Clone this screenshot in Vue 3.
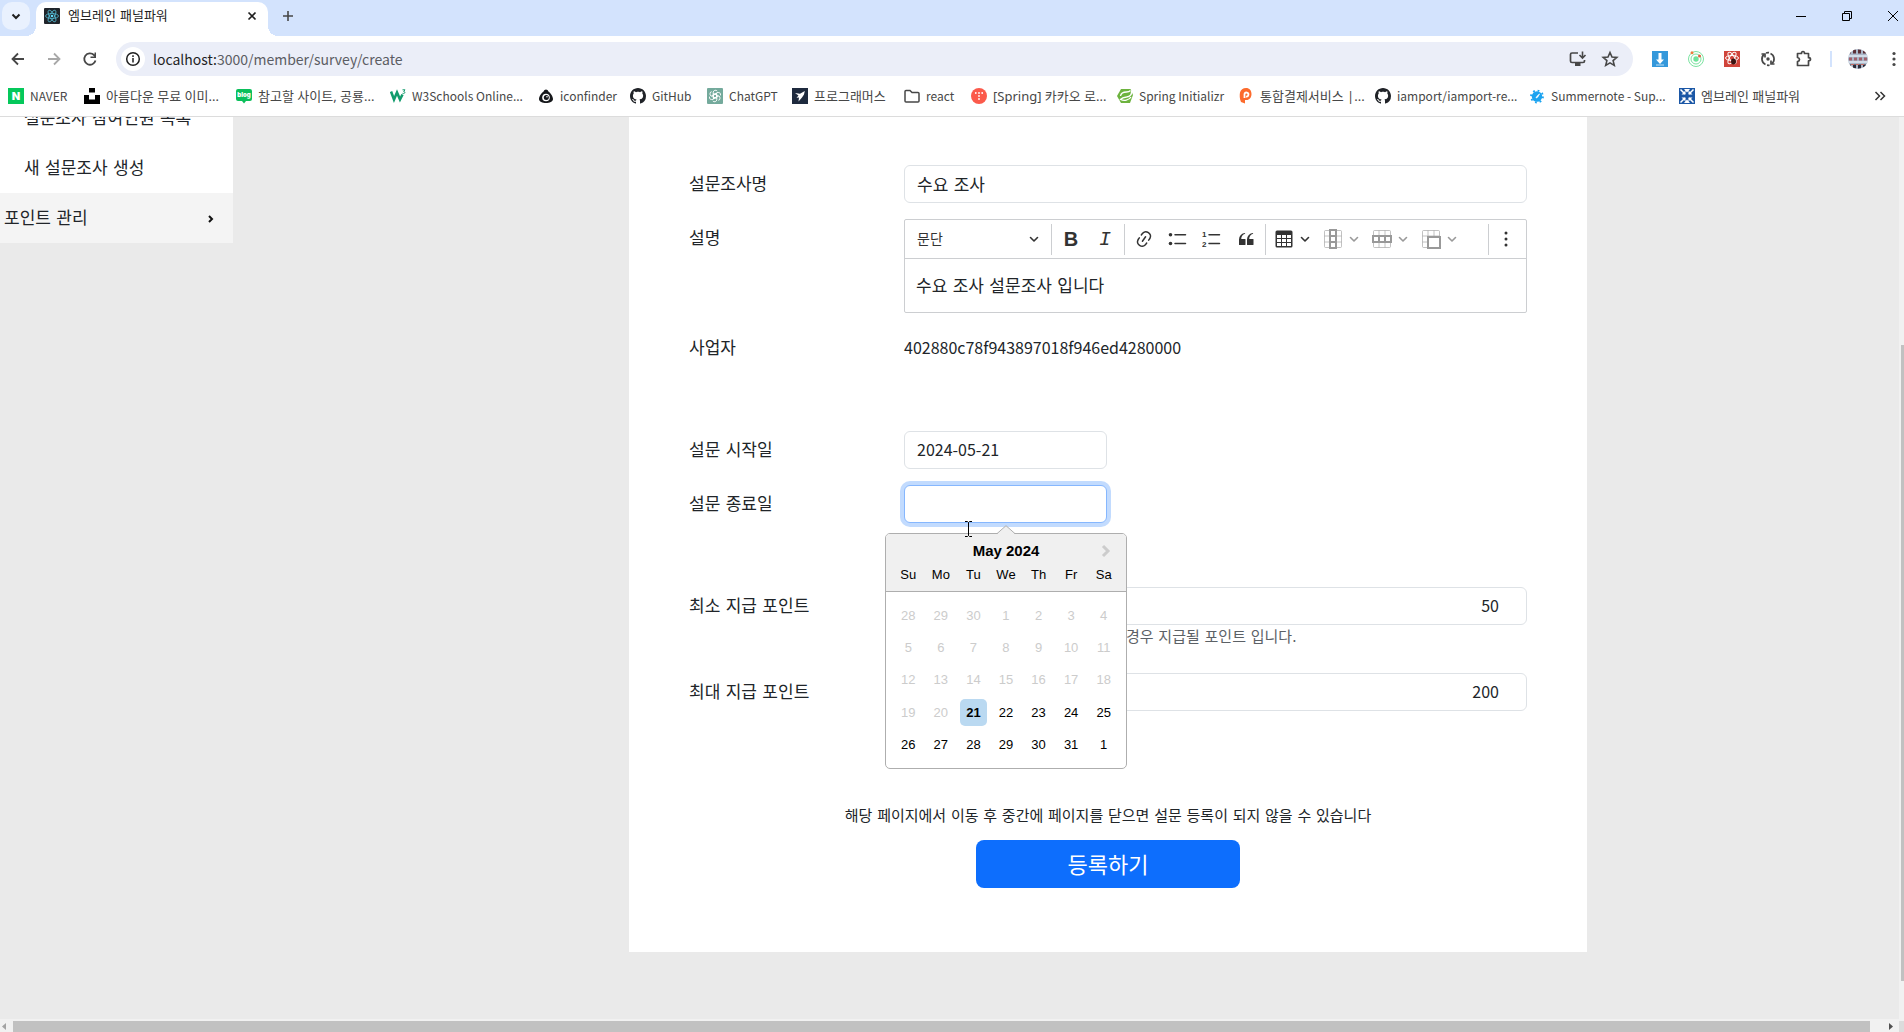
<script setup>
import { ref } from 'vue'

const bookmarks = [
  { icon: 'naver', mark: { text: 'N', y: 12, size: 11 }, label: 'NAVER', width: 60 },
  { icon: 'unsplash', label: '아름다운 무료 이미...', width: 136 },
  { icon: 'blog', mark: { text: 'blog', y: 9, size: 6 }, label: '참고할 사이트, 공룡...', width: 138 },
  { icon: 'w3', label: 'W3Schools Online...', width: 132 },
  { icon: 'finder', label: 'iconfinder', width: 76 },
  { icon: 'github', label: 'GitHub', width: 61 },
  { icon: 'gpt', label: 'ChatGPT', width: 69 },
  { icon: 'programmers', label: '프로그래머스', width: 96 },
  { icon: 'folder', label: 'react', width: 51 },
  { icon: 'tistory', label: '[Spring] 카카오 로...', width: 130 },
  { icon: 'spring', label: 'Spring Initializr', width: 105 },
  { icon: 'portone', label: '통합결제서비스 |...', width: 121 },
  { icon: 'github', label: 'iamport/iamport-re...', width: 138 },
  { icon: 'summernote', label: 'Summernote - Sup...', width: 134 },
  { icon: 'embrain', label: '엠브레인 패널파워', width: 126 },
]
const hasHangul = (s) => /[가-힣]/.test(s)

const weekdays = ['Su', 'Mo', 'Tu', 'We', 'Th', 'Fr', 'Sa']
const days = Array.from({ length: 35 }, (_, i) => {
  const date = new Date(2024, 3, 28 + i)
  return { key: i, n: date.getDate(), disabled: i < 23, selected: i === 23 }
})

const title = ref('수요 조사')
const startDate = ref('2024-05-21')
const endDate = ref('')
const minPoint = ref('50')
const maxPoint = ref('200')
</script>

<template>
  <div class="window">
    <svg class="defs" width="0" height="0" aria-hidden="true">
      <symbol id="naver" viewBox="0 0 16 16"><rect width="16" height="16" fill="#05c85b" /></symbol>
      <symbol id="unsplash" viewBox="0 0 16 16"><path d="M5 0h6v4.500H5zM0 7h5v4.500h6V7h5v9H0z" fill="#000" /></symbol>
      <symbol id="blog" viewBox="0 0 16 16">
        <path d="M2 1h12a2 2 0 0 1 2 2v8a2 2 0 0 1-2 2h-4l-2 2.500L6 13H2a2 2 0 0 1-2-2V3a2 2 0 0 1 2-2z" fill="#0bbf5b" />
      </symbol>
      <symbol id="w3" viewBox="0 0 16 16">
        <path d="M1 3.500l3 8 3-7 3 7 2.500-5" fill="none" stroke="#119b6c" stroke-width="2.600" />
        <path d="M12.500 1.800h2.500l-1.300 1.700c2 .200 1.500 2.500-1.200 1.800" fill="none" stroke="#119b6c" />
      </symbol>
      <symbol id="finder" viewBox="0 0 16 16">
        <path d="M8 1.500c1 0 2 .7 2.200 1.800C12.500 5 15 8.500 15 11c0 2.700-3.500 4-7 4s-7-1.300-7-4c0-2.500 2.500-6 4.800-7.700C6 2.200 7 1.500 8 1.500z" fill="#16181b" />
        <circle cx="8" cy="9.500" r="3.800" fill="#fff" /><circle cx="8.300" cy="9.500" r="2.500" fill="#16181b" />
        <circle cx="9" cy="8.700" r=".8" fill="#fff" />
      </symbol>
      <symbol id="github" viewBox="0 0 16 16">
        <path fill="#202328" d="M8 0C3.580 0 0 3.580 0 8c0 3.540 2.290 6.530 5.470 7.590.4.070.55-.17.55-.38 0-.19-.01-.82-.01-1.490-2.010.37-2.530-.49-2.690-.94-.09-.23-.48-.94-.82-1.130-.28-.15-.68-.52-.01-.53.63-.01 1.080.58 1.230.82.72 1.210 1.870.87 2.330.66.07-.52.28-.87.51-1.070-1.780-.2-3.640-.89-3.640-3.950 0-.87.31-1.590.82-2.150-.08-.2-.36-1.020.08-2.120 0 0 .67-.21 2.200.82.64-.18 1.320-.27 2-.27s1.360.09 2 .27c1.530-1.040 2.200-.82 2.200-.82.44 1.100.16 1.920.08 2.120.51.56.82 1.270.82 2.150 0 3.070-1.870 3.750-3.650 3.950.29.25.54.73.54 1.480 0 1.070-.01 1.930-.01 2.200 0 .21.15.46.55.38A8.010 8.010 0 0 0 16 8c0-4.420-3.580-8-8-8z" />
      </symbol>
      <symbol id="gpt" viewBox="0 0 16 16">
        <rect width="16" height="16" rx="1" fill="#74aa9c" />
        <g fill="none" stroke="#fff" stroke-width=".9">
          <path v-for="a in 6" :key="a" :transform="`rotate(${a * 60} 8 8)`" d="M6.200 7V4.200a2.300 2.300 0 0 1 4-1.200M6.200 5.200l3.500 2v2.200" />
        </g>
      </symbol>
      <symbol id="programmers" viewBox="0 0 16 16">
        <rect width="16" height="16" fill="#1e2a3e" />
        <path d="M3 5l5 .8L12.800 3 12 6.500 10 9.500l-3.500 4 .5-4-2.500.3L6.500 7.500z" fill="#fff" />
      </symbol>
      <symbol id="folder" viewBox="0 0 16 16"><path d="M1 3.500q0-1 1-1h4l2 2h6q1 0 1 1V13q0 1-1 1H2q-1 0-1-1z" fill="none" stroke="#474747" stroke-width="1.500" /></symbol>
      <symbol id="tistory" viewBox="0 0 16 16">
        <circle cx="8" cy="8" r="8" fill="#fb5a4b" />
        <g fill="#fff"><circle cx="4.800" cy="5" r=".9" /><circle cx="8" cy="5" r=".9" /><circle cx="11.200" cy="5" r=".9" /><circle cx="8" cy="8" r=".9" /><circle cx="8" cy="11" r=".9" /></g>
      </symbol>
      <symbol id="spring" viewBox="0 0 16 16">
        <path d="M4 1h9.500L16 7l-3 8H4L0 8z" fill="#6db33f" />
        <path d="M14.500 3c.5 3.500-1.500 5.500-5 6-2.500.3-4.500.8-6 2.500 3.500 1.500 8.500 1 10.500-2.500" fill="none" stroke="#fff" stroke-width="1.300" />
        <path d="M3.500 8c.5-3 3-4 6-4 1.500 0 3-.5 4-1.500" fill="none" stroke="#fff" stroke-width="1.300" />
      </symbol>
      <symbol id="portone" viewBox="0 0 16 16">
        <path d="M8 0c3.500 0 5.500 2.600 5.500 6S11.500 12 8.500 12H7v3.500L3 14C1.500 11 1.500 7 2 4.500 2.600 2 5 0 8 0z" fill="#fc6b2d" />
        <path d="M6.500 10V5.500M6.500 6a2 2 0 1 1 1.500 2.500" fill="none" stroke="#fff" stroke-width="1.800" />
      </symbol>
      <symbol id="summernote" viewBox="0 0 16 16">
        <circle cx="8" cy="8.500" r="5.200" fill="#1aa3f0" />
        <circle cx="8" cy="8.500" r="6" fill="none" stroke="#1aa3f0" stroke-width="1.800" stroke-dasharray="1.800 2.900" />
        <path d="M7 10l.8-1.600L10.500 6 8.600 9.200z" fill="#fff" stroke="#fff" stroke-width=".8" />
      </symbol>
      <symbol id="embrain" viewBox="0 0 16 16">
        <rect width="16" height="16" fill="#1b57a6" />
        <g stroke="#fff" stroke-width="1.500" fill="#fff">
          <path d="M1.500 1.500L6 6M14.500 1.500L10 6M1.500 14.500L6 10M14.500 14.500L10 10" />
          <path stroke="none" d="M5 1h6L8 4.500zM5 15h6l-3-3.500zM2.500 6.500h4v-4zM13.500 6.500h-4v-4zM2.500 9.500h4v4zM13.500 9.500h-4v4z" />
        </g>
      </symbol>
      <symbol id="caret" viewBox="0 0 10 10"><path d="M1.500 3.500L5 7l3.500-3.500" fill="none" stroke="currentColor" stroke-width="1.600" stroke-linecap="round" stroke-linejoin="round" /></symbol>
    </svg>

    <header class="chrome">
      <div class="tabstrip">
        <button class="tab-search" aria-label="탭 검색">
          <svg width="12" height="12" viewBox="0 0 12 12"><path d="M2.500 4.500L6 8l3.500-3.500" fill="none" stroke="#1f1f1f" stroke-width="2" /></svg>
        </button>
        <div class="tab">
          <svg width="16" height="16" viewBox="0 0 16 16">
            <rect width="16" height="16" rx="1" fill="#20252b" />
            <g fill="none" stroke="#53b9d2" stroke-width=".8">
              <ellipse cx="8" cy="8" rx="6.500" ry="2.500" />
              <ellipse cx="8" cy="8" rx="6.500" ry="2.500" transform="rotate(60 8 8)" />
              <ellipse cx="8" cy="8" rx="6.500" ry="2.500" transform="rotate(120 8 8)" />
            </g>
            <circle cx="8" cy="8" r="1.300" fill="#61dafb" />
          </svg>
          <span class="tab-title">엠브레인 패널파워</span>
          <button class="plain" aria-label="탭 닫기">
            <svg width="16" height="16" viewBox="0 0 16 16"><path d="M4.500 4.500l7 7M11.500 4.500l-7 7" stroke="#1f1f1f" stroke-width="1.700" /></svg>
          </button>
        </div>
        <button class="plain new-tab" aria-label="새 탭">
          <svg width="12" height="12" viewBox="0 0 12 12"><path d="M6 1v10M1 6h10" stroke="#474747" stroke-width="1.600" /></svg>
        </button>
        <div class="win-controls">
          <button class="plain" aria-label="최소화"><svg width="12" height="12" viewBox="0 0 12 12"><path d="M1 6.500h10" stroke="#000" /></svg></button>
          <button class="plain" aria-label="복원"><svg width="12" height="12" viewBox="0 0 12 12"><path d="M1.500 3.500h7v7h-7zM3.500 3.500v-2h7v7h-2" fill="none" stroke="#000" /></svg></button>
          <button class="plain" aria-label="닫기"><svg width="12" height="12" viewBox="0 0 12 12"><path d="M1 1l10 10M11 1L1 11" stroke="#000" /></svg></button>
        </div>
      </div>

      <div class="toolbar">
        <button class="plain nav-btn" aria-label="뒤로"><svg width="16" height="16" viewBox="0 0 16 16"><path d="M14 8H3M8 2.500L2.500 8 8 13.500" fill="none" stroke="#474747" stroke-width="1.800" /></svg></button>
        <button class="plain nav-btn" aria-label="앞으로"><svg width="16" height="16" viewBox="0 0 16 16"><path d="M2 8h11M8 2.500L13.500 8 8 13.500" fill="none" stroke="#a8a8a8" stroke-width="1.800" /></svg></button>
        <button class="plain nav-btn" aria-label="새로고침"><svg width="16" height="16" viewBox="0 0 16 16"><path d="M13.500 9.500A5.700 5.700 0 1 1 12 4l1.500 1.500" fill="none" stroke="#474747" stroke-width="1.800" /><path d="M14 1.500V7H8.500V5.500h4v-4z" fill="#474747" /></svg></button>
        <div class="omnibox">
          <span class="site-info"><svg width="16" height="16" viewBox="0 0 16 16"><circle cx="8" cy="8" r="6.300" fill="none" stroke="#1f1f1f" stroke-width="1.500" /><path d="M8 7v4.500M8 4.300v1.600" stroke="#1f1f1f" stroke-width="1.500" /></svg></span>
          <span class="url"><span class="host">localhost:</span>3000/member/survey/create</span>
          <button class="plain box-btn" aria-label="앱 설치"><svg width="18" height="18" viewBox="0 0 18 18"><path d="M9 3H3q-1.500 0-1.500 1.500V11q0 1.500 1.500 1.500h11q1.500 0 1.500-1.500v-1" fill="none" stroke="#474747" stroke-width="1.700" /><path d="M6 13h5.500v3H6z" fill="#474747" /><path d="M13.500 1.500v6M10.500 5l3 3 3-3" fill="none" stroke="#474747" stroke-width="1.600" /></svg></button>
          <button class="plain box-btn" aria-label="북마크에 추가"><svg width="18" height="18" viewBox="0 0 18 18"><path d="M9 2.500l2 4.500 4.800.4-3.700 3.200 1.200 4.800L9 12.900l-4.300 2.500 1.200-4.800L2.200 7.400 7 7z" fill="none" stroke="#474747" stroke-width="1.600" /></svg></button>
        </div>
        <div class="extensions">
          <button class="plain nav-btn" aria-label="다운로드"><svg width="16" height="16" viewBox="0 0 16 16"><rect width="16" height="16" fill="#3498db" /><path d="M6.500 2h3v6.500H12L8 13 4 8.500h2.500z" fill="#fff" /><path d="M4 14h8" stroke="#bfe0f5" /></svg></button>
          <button class="plain nav-btn" aria-label="레이더"><svg width="16" height="16" viewBox="0 0 16 16"><g fill="none" stroke="#7be3a0"><circle cx="8" cy="8" r="7.500" /><circle cx="8" cy="8" r="5" /></g><circle cx="8" cy="8" r="2.700" fill="#6fe39a" /><circle cx="4" cy="1.700" r="1.500" fill="#ee7b3c" /><circle cx="11.500" cy="5" r="1.500" fill="#e2613c" /></svg></button>
          <button class="plain nav-btn" aria-label="React 개발자 도구"><svg width="16" height="16" viewBox="0 0 16 16"><rect width="16" height="16" fill="#d0443a" /><g fill="none" stroke="#fff"><ellipse cx="8" cy="7" rx="6.500" ry="2.500" /><ellipse cx="8" cy="7" rx="6.500" ry="2.500" transform="rotate(60 8 7)" /><ellipse cx="8" cy="7" rx="6.500" ry="2.500" transform="rotate(120 8 7)" /></g><ellipse cx="9.500" cy="10.500" rx="2.500" ry="3" fill="#3a1512" /></svg></button>
          <button class="plain nav-btn" aria-label="새로고침 확장"><svg width="16" height="16" viewBox="0 0 16 16"><g fill="none" stroke="#474747" stroke-width="1.700"><path d="M5.500 13.500A6 6 0 0 1 4 3.500M12 12.500A6 6 0 0 0 10.500 2.500M9 1.700A6 6 0 0 0 6 2" /><path d="M1.500 3H5v3.500M14.500 13H11V9.500M7 14.200q1.500.2 2.500 0" /></g><circle cx="8" cy="8" r="1.700" fill="#474747" /></svg></button>
          <button class="plain nav-btn" aria-label="확장 프로그램"><svg width="18" height="18" viewBox="0 0 18 18"><path d="M2.500 3.500h4q0-2 1.500-2t1.500 2h4v4.200q2 0 2 1.600t-2 1.600v4.600h-11v-4q2-.3 2-2t-2-2z" fill="none" stroke="#474747" stroke-width="1.700" stroke-linejoin="round" /></svg></button>
          <span class="divider"></span>
          <button class="plain avatar" aria-label="프로필"><svg width="20" height="20" viewBox="0 0 20 20"><clipPath id="avatar-clip"><circle cx="10" cy="10" r="10" /></clipPath><g clip-path="url(#avatar-clip)"><rect width="20" height="20" fill="#a9b6c8" /><path d="M0 2.500h20" stroke="#5a2f36" stroke-width="4" stroke-dasharray="3 2" /><path d="M0 7h20M0 13h20" stroke="#dfe9f2" stroke-width="1.500" /><path d="M1 10h18" stroke="#a0606c" stroke-width="3" stroke-dasharray="3 2" /><path d="M0 17.500h20" stroke="#2c2b38" stroke-width="4" stroke-dasharray="3 2" /><path d="M3 15.500h14" stroke="#c96a62" stroke-dasharray="3 2" /></g></svg></button>
          <button class="plain menu-dots" aria-label="메뉴"><svg width="4" height="16" viewBox="0 0 4 16" fill="#474747"><circle cx="2" cy="2.500" r="1.600" /><circle cx="2" cy="8" r="1.600" /><circle cx="2" cy="13.500" r="1.600" /></svg></button>
        </div>
      </div>

      <nav class="bookmarks">
        <a v-for="(b, i) in bookmarks" :key="i" href="#" class="bookmark" :class="{ ko: hasHangul(b.label) }" :style="{ width: b.width + 'px' }">
          <svg width="16" height="16">
            <use :href="'#' + b.icon" />
            <text v-if="b.mark" class="mark" x="8" :y="b.mark.y" :font-size="b.mark.size">{{ b.mark.text }}</text>
          </svg>
          <span>{{ b.label }}</span>
        </a>
        <button class="plain more-marks" aria-label="북마크 더보기"><svg width="12" height="12" viewBox="0 0 12 12"><path d="M1.500 2l4 4-4 4M6.500 2l4 4-4 4" fill="none" stroke="#333" stroke-width="1.500" /></svg></button>
      </nav>
    </header>

    <div class="viewport">
      <aside class="sidebar">
        <a href="#" class="side-item sub">설문조사 참여인원 목록</a>
        <a href="#" class="side-item sub">새 설문조사 생성</a>
        <a href="#" class="side-item group">포인트 관리
          <svg width="8" height="10" viewBox="0 0 8 10"><path d="M2 3l3 3-3 3" fill="none" stroke="#111" stroke-width="2" /></svg>
        </a>
      </aside>

      <main class="main">
        <form class="card" @submit.prevent>
          <div class="row">
            <label class="label" for="title">설문조사명</label>
            <input id="title" v-model="title" class="input ko-text" type="text" />
          </div>

          <div class="row">
            <label class="label" for="editor">설명</label>
            <div class="editor">
              <div class="editor-bar">
                <div class="heading-select">
                  <select aria-label="단락 스타일"><option>문단</option></select>
                  <svg width="10" height="10"><use href="#caret" /></svg>
                </div>
                <span class="sep"></span>
                <button type="button" class="tool bold">B</button>
                <button type="button" class="tool italic">I</button>
                <span class="sep"></span>
                <button type="button" class="tool" aria-label="링크"><svg width="20" height="20" viewBox="0 0 20 20"><path fill="currentColor" d="m11.077 15 .991-1.416a.75.75 0 1 1 1.229.86l-1.148 1.640a.748.748 0 0 1-.217.206 5.251 5.251 0 0 1-8.503-5.955.741.741 0 0 1 .12-.274l1.147-1.639a.75.75 0 1 1 1.228.860L4.933 10.700l.006.003a3.750 3.750 0 0 0 6.132 4.294l.006.004zm5.494-5.335a.748.748 0 0 1-.12.274l-1.147 1.639a.75.75 0 1 1-1.228-.860l.860-1.230a3.750 3.750 0 0 0-6.144-4.301l-.860 1.229a.75.75 0 0 1-1.229-.860l1.148-1.640a.748.748 0 0 1 .217-.206 5.251 5.251 0 0 1 8.503 5.955zm-4.563-2.532a.75.75 0 0 1 .184 1.045l-3.155 4.505a.75.75 0 1 1-1.229-.860l3.155-4.506a.75.75 0 0 1 1.045-.184z" /></svg></button>
                <button type="button" class="tool" aria-label="글머리 기호 목록"><svg width="20" height="20" viewBox="0 0 20 20"><path d="M7 5.700h10.500M7 14.500h10.500" stroke="currentColor" stroke-width="1.500" stroke-linecap="round" /><circle cx="2.500" cy="5.700" r="1.800" fill="currentColor" /><circle cx="2.500" cy="14.500" r="1.800" fill="currentColor" /></svg></button>
                <button type="button" class="tool" aria-label="번호 목록"><svg width="20" height="20" viewBox="0 0 20 20"><path d="M7 5.700h10.500M7 14.500h10.500" stroke="currentColor" stroke-width="1.500" stroke-linecap="round" /><g font-family="Liberation Sans, sans-serif" font-weight="700" font-size="8" fill="currentColor"><text x="0" y="8">1</text><text x="0" y="18">2</text></g></svg></button>
                <button type="button" class="tool" aria-label="인용"><svg width="20" height="20" viewBox="0 0 20 20"><path fill="currentColor" d="M3 10.423a6.500 6.500 0 0 1 6.056-6.408l.038.670C6.448 5.423 5.354 7.663 5.220 10H9c.552 0 .5.432.5.986v4.511c0 .554-.448.503-1 .503h-5c-.552 0-.5-.449-.5-1.003v-4.574zm8 0a6.500 6.500 0 0 1 6.056-6.408l.038.670c-2.646.739-3.740 2.979-3.873 5.315H17c.552 0 .5.432.5.986v4.511c0 .554-.448.503-1 .503h-5c-.552 0-.5-.449-.5-1.003v-4.574z" /></svg></button>
                <span class="sep"></span>
                <button type="button" class="tool-drop" aria-label="표">
                  <svg width="20" height="20" viewBox="0 0 20 20"><path fill="currentColor" fill-rule="evenodd" d="M3 1.500h14a1.500 1.500 0 0 1 1.500 1.500v14a1.500 1.500 0 0 1-1.500 1.500H3a1.500 1.500 0 0 1-1.500-1.500V3A1.500 1.500 0 0 1 3 1.500zM3 6v3h4V6zM8 6v3h4V6zM13 6v3h4V6zM3 10v3h4v-3zM8 10v3h4v-3zM13 10v3h4v-3zM3 14v3h4v-3zM8 14v3h4v-3zM13 14v3h4v-3z" /></svg>
                  <svg width="10" height="10"><use href="#caret" /></svg>
                </button>
                <button type="button" class="tool-drop off" aria-label="열">
                  <svg width="20" height="20" viewBox="0 0 20 20" fill="none" stroke="currentColor"><path opacity=".6" d="M2.500 1.500h15q1 0 1 1v15q0 1-1 1h-15q-1 0-1-1v-15q0-1 1-1zM1.500 7h17M1.500 13h17" /><path stroke-width="2" d="M7 1h6v18H7zM7 7h6M7 13h6" /></svg>
                  <svg width="10" height="10"><use href="#caret" /></svg>
                </button>
                <button type="button" class="tool-drop off" aria-label="행">
                  <svg width="20" height="20" viewBox="0 0 20 20" fill="none" stroke="currentColor"><path opacity=".6" d="M2.500 1.500h15q1 0 1 1v15q0 1-1 1h-15q-1 0-1-1v-15q0-1 1-1zM7 1.500v17M13 1.500v17" /><path stroke-width="2" d="M1 7h18v6H1zM7 7v6M13 7v6" /></svg>
                  <svg width="10" height="10"><use href="#caret" /></svg>
                </button>
                <button type="button" class="tool-drop off" aria-label="셀 병합">
                  <svg width="20" height="20" viewBox="0 0 20 20" fill="none" stroke="currentColor"><path opacity=".6" d="M6 18.500H2.500q-1 0-1-1v-15q0-1 1-1h15q1 0 1 1V7M1.500 7h17M1.500 13h5M7 1.500v6M13 1.500v6" /><path stroke-width="2" d="M7 8h12v11H7z" /></svg>
                  <svg width="10" height="10"><use href="#caret" /></svg>
                </button>
                <span class="fill"></span>
                <span class="sep"></span>
                <button type="button" class="tool more" aria-label="더보기"><svg width="4" height="16" viewBox="0 0 4 16" fill="currentColor"><circle cx="2" cy="2" r="1.500" /><circle cx="2" cy="8" r="1.500" /><circle cx="2" cy="14" r="1.500" /></svg></button>
              </div>
              <div id="editor" class="editor-body ko-text" contenteditable="true">수요 조사 설문조사 입니다</div>
            </div>
          </div>

          <div class="row">
            <span class="label">사업자</span>
            <span class="value">402880c78f943897018f946ed4280000</span>
          </div>

          <div class="row section">
            <label class="label" for="start">설문 시작일</label>
            <input id="start" v-model="startDate" class="input date" type="text" />
          </div>

          <div class="row">
            <label class="label" for="end">설문 종료일</label>
            <div class="date-field">
              <input id="end" v-model="endDate" class="input date focused" type="text" />
              <div class="picker">
                <svg class="picker-tip" width="20" height="10" viewBox="0 0 20 10"><path d="M0 10L10 .7 20 10z" fill="#f0f0f0" /><path d="M0 9.500L10 .7l10 8.800" fill="none" stroke="#aeaeae" /></svg>
                <div class="picker-head">
                  <div class="month">May 2024</div>
                  <button type="button" class="plain next" aria-label="다음 달"><svg width="10" height="14" viewBox="0 0 10 14"><path d="M2 2l5 5-5 5" fill="none" stroke="#ccc" stroke-width="3" /></svg></button>
                  <div class="weekdays"><span v-for="w in weekdays" :key="w">{{ w }}</span></div>
                </div>
                <div class="days">
                  <button v-for="d in days" :key="d.key" type="button" class="day" :class="{ selected: d.selected }" :disabled="d.disabled">{{ d.n }}</button>
                </div>
              </div>
              <svg class="ibeam" width="9" height="16" viewBox="0 0 9 16"><path d="M1 .5h2.500l1 1 1-1H8M1 15.500h2.500l1-1 1 1H8M4.500 1.500v13" fill="none" stroke="#000" /></svg>
            </div>
          </div>

          <div class="row section">
            <label class="label" for="min">최소 지급 포인트</label>
            <div>
              <input id="min" v-model="minPoint" class="input number" type="text" inputmode="numeric" />
              <p class="hint">경우 지급될 포인트 입니다.</p>
            </div>
          </div>

          <div class="row">
            <label class="label" for="max">최대 지급 포인트</label>
            <input id="max" v-model="maxPoint" class="input number" type="text" inputmode="numeric" />
          </div>

          <div class="footer">
            <p class="notice">해당 페이지에서 이동 후 중간에 페이지를 닫으면 설문 등록이 되지 않을 수 있습니다</p>
            <button type="submit" class="submit">등록하기</button>
          </div>
        </form>
      </main>

      <div class="vscroll"><div class="vthumb"></div></div>
    </div>

    <div class="hscroll">
      <svg width="13" height="11" viewBox="0 0 13 11"><path d="M6 2v7L2 5.500z" fill="#a3a3a3" /></svg>
      <div class="hthumb"></div>
      <svg width="29" height="11" viewBox="0 0 29 11"><path d="M19 2v7l4-3.500z" fill="#505050" /></svg>
      <span class="corner"></span>
    </div>
  </div>
</template>

<style>
body {
  margin: 0;
}
</style>

<style scoped>
.window,
.window * {
  box-sizing: border-box;
}
.window {
  display: flex;
  flex-direction: column;
  min-height: 100vh;
  overflow: hidden;
  font-family: "Noto Sans CJK KR", sans-serif;
  font-size: 16px;
  color: #212529;
  background: #eaeaea;
}
.defs {
  position: absolute;
}
button,
input,
select {
  font: inherit;
  color: inherit;
}
svg {
  display: block;
  flex: none;
}
p {
  margin: 0;
}
.plain {
  display: flex;
  align-items: center;
  justify-content: center;
  padding: 0;
  border: 0;
  background: none;
}

/* browser chrome */
.chrome {
  background: #fff;
  border-bottom: 1px solid #dcdcdc;
}
.tabstrip {
  display: flex;
  height: 36px;
  padding-left: 2px;
  background: #d3e3fd;
}
.tab-search {
  display: flex;
  align-items: center;
  justify-content: center;
  width: 28px;
  height: 28px;
  margin: 2px 6px 0 0;
  padding: 0;
  border: 0;
  border-radius: 10px;
  background: #e9f1fe;
}
.tab {
  position: relative;
  display: flex;
  align-items: center;
  gap: 8px;
  width: 232px;
  margin-top: 2px;
  padding: 0 8px 6px;
  border-radius: 10px 10px 0 0;
  background: #fff;
}
.tab::before,
.tab::after {
  content: "";
  position: absolute;
  bottom: 0;
  width: 10px;
  height: 10px;
}
.tab::before {
  right: 100%;
  background: radial-gradient(circle at 0 0, transparent 10px, #fff 10px);
}
.tab::after {
  left: 100%;
  background: radial-gradient(circle at 100% 0, transparent 10px, #fff 10px);
}
.tab-title {
  flex: 1;
  font-family: "DejaVu Sans", "Noto Sans CJK KR", sans-serif;
  font-size: 13px;
  line-height: 20px;
  color: #1f1f1f;
  white-space: nowrap;
}
.new-tab {
  width: 40px;
  height: 32px;
}
.win-controls {
  display: flex;
  height: 32px;
  margin: 0 -12px 0 auto;
}
.win-controls button {
  width: 46px;
}
.toolbar {
  display: flex;
  align-items: center;
  height: 46px;
}
.nav-btn {
  width: 36px;
  height: 34px;
}
.omnibox {
  display: flex;
  flex: 1;
  align-items: center;
  height: 34px;
  margin-left: 8px;
  padding: 0 7px 0 5px;
  border-radius: 17px;
  background: #ebeef8;
}
.site-info {
  display: flex;
  align-items: center;
  justify-content: center;
  width: 24px;
  height: 24px;
  border-radius: 12px;
  background: #fff;
}
.url {
  flex: 1;
  padding-left: 8px;
  font-size: 14px;
  line-height: 20px;
  color: #5b5d63;
}
.host {
  color: #1f1f1f;
}
.box-btn {
  width: 32px;
  height: 32px;
}
.extensions {
  display: flex;
  align-items: center;
  padding-left: 9px;
}
.divider {
  width: 2px;
  height: 16px;
  margin: 0 11px 0 8px;
  background: #d3e3fd;
}
.avatar {
  width: 30px;
}
.menu-dots {
  width: 20px;
  margin-left: 11px;
}
.bookmarks {
  display: flex;
  align-items: center;
  gap: 16px;
  height: 34px;
  padding: 0 18px 6px 8px;
}
.bookmark {
  display: flex;
  flex: none;
  align-items: center;
  gap: 6px;
  font-size: 12px;
  line-height: 20px;
  color: #474747;
  white-space: nowrap;
  text-decoration: none;
}
.bookmark.ko {
  font-family: "Noto Sans", "Noto Sans CJK KR", sans-serif;
  font-size: 13px;
}
.mark {
  fill: #fff;
  font-family: Inter, sans-serif;
  font-weight: 900;
  text-anchor: middle;
}
.more-marks {
  margin-left: auto;
}

/* page */
.viewport {
  display: flex;
  flex: 1;
}
.sidebar {
  display: flex;
  flex: none;
  flex-direction: column;
  justify-content: flex-end;
  width: 233px;
  height: 126px;
  overflow: hidden;
  background: #fff;
}
.side-item {
  display: flex;
  flex: none;
  align-items: center;
  justify-content: space-between;
  height: 50px;
  font-family: "DejaVu Sans", "Noto Sans CJK KR", sans-serif;
  font-size: 17px;
  line-height: 24px;
  color: inherit;
  text-decoration: none;
}
.side-item.sub {
  padding-left: 24px;
}
.side-item.group {
  padding: 0 18px 0 4px;
  background: #f4f4f4;
}
.main {
  flex: 1;
  padding: 0 312px 67px 396px;
}
.card {
  display: flex;
  flex-direction: column;
  gap: 16px;
  padding: 48px 60px 64px;
  background: #fff;
}
.row {
  display: grid;
  grid-template-columns: 215px 1fr;
}
.row.section {
  margin-top: 48px;
}
.label {
  font-family: "DejaVu Sans", "Noto Sans CJK KR", sans-serif;
  font-size: 17px;
  line-height: 38px;
}
.value {
  line-height: 36px;
}
.ko-text {
  font-family: "DejaVu Sans", "Noto Sans CJK KR", sans-serif;
  font-size: 17px;
}
.input {
  display: block;
  width: 100%;
  height: 38px;
  padding: 0 12px 2px;
  border: 1px solid #dee2e6;
  border-radius: 6px;
  outline: 0;
  background: #fff;
}
.input.date {
  width: 203px;
}
.input.number {
  padding-right: 27px;
  text-align: right;
}
.input.focused {
  border-color: #86b7fe;
  box-shadow: 0 0 0 4px #c2dbfe;
}
.editor {
  border: 1px solid #ccced1;
  border-radius: 2px;
}
.editor-bar {
  display: flex;
  align-items: center;
  height: 39px;
  border-bottom: 1px solid #ccced1;
  color: #333;
}
.heading-select {
  display: flex;
  align-items: center;
  width: 146px;
  padding: 0 12px;
}
.heading-select select {
  flex: 1;
  padding: 0 0 2px;
  border: 0;
  appearance: none;
  background: none;
  font-size: 14px;
  line-height: 24px;
}
.sep {
  width: 1px;
  height: 31px;
  margin: 0 2px;
  background: #ccced1;
}
.heading-select + .sep {
  margin-left: 0;
}
.tool {
  display: flex;
  align-items: center;
  justify-content: center;
  width: 34px;
  height: 34px;
  padding: 0;
  border: 0;
  background: none;
}
.bold {
  font-family: "Liberation Sans", sans-serif;
  font-weight: 700;
  font-size: 20px;
}
.italic {
  font-family: "Liberation Mono", monospace;
  font-style: italic;
  font-size: 20px;
}
.tool.more {
  width: 30px;
  margin-right: 5px;
}
.tool-drop {
  display: flex;
  align-items: center;
  gap: 6px;
  width: 49px;
  height: 34px;
  padding: 0 0 0 6px;
  border: 0;
  background: none;
}
.tool-drop.off {
  color: #999;
}
.fill {
  flex: 1;
}
.editor-body {
  padding: 15px 11px 14px;
  line-height: 24px;
}
.date-field {
  position: relative;
  width: 203px;
}

/* date picker */
.picker {
  position: absolute;
  z-index: 2;
  top: 48px;
  left: -19px;
  width: 242px;
  border: 1px solid #aeaeae;
  border-radius: 5px;
  background: #fff;
  font-family: "Liberation Sans", sans-serif;
  font-size: 13px;
  color: #000;
}
.picker-tip {
  position: absolute;
  bottom: 100%;
  left: 110px;
  margin-bottom: -1px;
}
.picker-head {
  position: relative;
  padding: 7px 6px 2px;
  border-bottom: 1px solid #aeaeae;
  border-radius: 4px 4px 0 0;
  background: #f0f0f0;
}
.month {
  font-weight: 700;
  font-size: 15px;
  line-height: 20px;
  text-align: center;
}
.next {
  position: absolute;
  top: 7px;
  right: 15px;
  height: 20px;
}
.weekdays,
.days {
  display: grid;
  grid-template-columns: repeat(7, 1fr);
  justify-items: center;
}
.weekdays {
  line-height: 28px;
}
.days {
  grid-template-rows: repeat(5, 1fr);
  align-items: center;
  height: 176px;
  padding: 7px 6px;
}
.day {
  width: 27px;
  height: 27px;
  padding: 0;
  border: 0;
  border-radius: 5px;
  background: none;
}
.day:disabled {
  color: #ccc;
}
.day.selected {
  background: #bad9f1;
  font-weight: 700;
}
.ibeam {
  position: absolute;
  z-index: 3;
  top: 36px;
  left: 60px;
}
.hint {
  margin-bottom: 8px;
  padding-left: 222px;
  font-family: "DejaVu Sans", "Noto Sans CJK KR", sans-serif;
  font-size: 15px;
  line-height: 24px;
  color: #5c6166;
}
.footer {
  display: flex;
  flex-direction: column;
  align-items: center;
  gap: 12px;
  padding-top: 77px;
}
.notice {
  font-family: "DejaVu Sans", "Noto Sans CJK KR", sans-serif;
  font-size: 15px;
  line-height: 24px;
}
.submit {
  width: 264px;
  height: 48px;
  padding: 0 0 3px;
  border: 0;
  border-radius: 8px;
  background: #0d6efd;
  font-size: 22px;
  color: #fff;
}

/* scroll bars */
.vscroll {
  display: flex;
  width: 5px;
  padding: 228px 0 38px 2px;
  background: #f1f1f1;
}
.vthumb {
  flex: 1;
  background: #c1c1c1;
}
.hscroll {
  display: flex;
  height: 13px;
  padding-top: 2px;
  background: #f1f1f1;
}
.hthumb {
  flex: 1;
  background: #c1c1c1;
}
.corner {
  width: 5px;
  background: #dcdcdc;
}
</style>
